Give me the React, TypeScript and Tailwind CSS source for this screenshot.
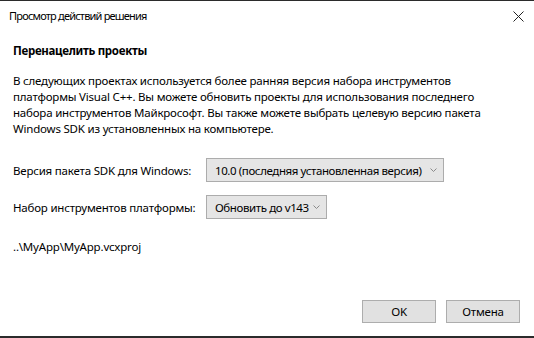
const Chevron = () => (
    <svg width="7" height="4" viewBox="0 0 7 4" className="ml-auto shrink-0">
        <path d="M0.5 0.5 L3.5 3.5 L6.5 0.5" fill="none" stroke="#8a8a8a" strokeWidth="1" />
    </svg>
)

const Select = ({ value, width }: { value: string; width: string }) => (
    <div className={`h-[24px] ${width} flex items-center pl-[8px] pr-[6px] bg-[#e5e5e5] border border-[#acacac] whitespace-nowrap tracking-[-0.4px]`}>
        <span>{value}</span>
        <Chevron />
    </div>
)

const App = () => {
    return (
        <div
            className="w-[534px] h-[338px] bg-white flex flex-col border-t border-b-2 border-[#2b2b2b] text-[11.5px] tracking-[-0.2px] text-black overflow-hidden"
            style={{ fontFamily: '"Noto Sans", "Open Sans", sans-serif' }}
        >
            <div className="h-[31px] flex items-center justify-between pl-[9px] pr-[10px]">
                <span className="text-[11px] tracking-[-0.8px]">Просмотр действий решения</span>
                <svg width="11" height="11" viewBox="0 0 11 11">
                    <path d="M0.5 0.5 L10.5 10.5 M10.5 0.5 L0.5 10.5" stroke="#222" strokeWidth="1" />
                </svg>
            </div>
            <div className="flex flex-col px-[13px] whitespace-nowrap">
                <div className="mt-[10px] font-bold tracking-[-0.3px]">Перенацелить проекты</div>
                <div className="mt-[14px] leading-[16px] flex flex-col">
                    <span>В следующих проектах используется более ранняя версия набора инструментов</span>
                    <span>платформы Visual C++. Вы можете обновить проекты для использования последнего</span>
                    <span>набора инструментов Майкрософт. Вы также можете выбрать целевую версию пакета</span>
                    <span>Windows SDK из установленных на компьютере.</span>
                </div>
                <div className="mt-[21px] flex items-center">
                    <span className="w-[193px]">Версия пакета SDK для Windows:</span>
                    <Select value="10.0 (последняя установленная версия)" width="w-[238px]" />
                </div>
                <div className="mt-[13px] flex items-center">
                    <span className="w-[193px]">Набор инструментов платформы:</span>
                    <Select value="Обновить до v143" width="w-[121px]" />
                </div>
                <div className="mt-[19px]">..\MyApp\MyApp.vcxproj</div>
            </div>
            <div className="mt-auto mb-[13px] flex justify-end gap-[10px] pr-[14px]">
                <button className="w-[74px] h-[23px] bg-[#e1e1e1] border border-[#adadad]">OK</button>
                <button className="w-[74px] h-[23px] bg-[#e1e1e1] border border-[#adadad]">Отмена</button>
            </div>
        </div>
    )
}

export default App
